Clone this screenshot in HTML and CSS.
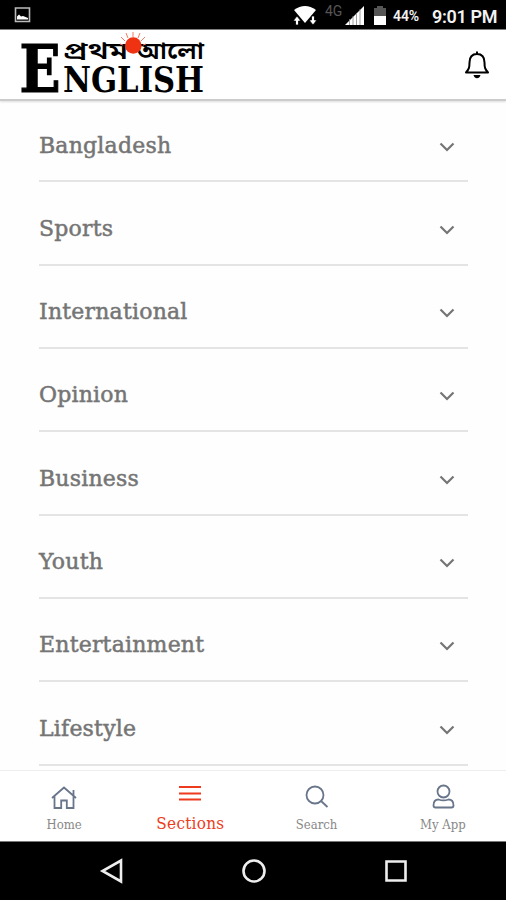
FILE: index.html
```html
<!DOCTYPE html>
<html lang="en">
<head>
<meta charset="utf-8">
<meta name="viewport" content="width=device-width, initial-scale=1">
<title>Prothom Alo English</title>
<link rel="stylesheet" href="styles.css">
</head>
<body>
<div class="status">
  <svg class="status-photo" width="18" height="18" viewBox="0 0 18 18"><path d="M1.500 2h14v13.500h-14z" fill="none" stroke="#bbb" stroke-width="1.6"/><path d="M3 13.500v-3l2-2 2 2 2-.5 5 2v1.500z" fill="#fff"/></svg>
  <svg class="status-icons" width="96" height="29" viewBox="0 0 96 29">
    <path d="M0 10Q11 2 22 10L11 23z" fill="#fff"/>
    <path d="M-1 21l4-5 4 5H4.500v4h-3v-4zM15 20h2.500v-4h3v4H23l-4 5z" fill="#fff" stroke="#000" stroke-width=".8"/>
    <text x="31" y="16" class="network">4G</text>
    <path d="M51 25L70 6v19z" fill="#fff"/>
    <path d="M55.500 19v6M59 16v9M62.500 13v12M66 9v16" stroke="#888" stroke-width=".8"/>
    <path d="M80 8h3V6h6v2h3v9H80z" fill="#555"/><path d="M80 16h12v9H80z" fill="#fff"/>
  </svg>
  <span class="battery">44%</span><span class="clock">9:01 PM</span>
</div>
<header class="header">
  <svg class="logo" width="184" height="65" viewBox="0 0 184 65">
    <text x="-1.500" y="61.500" class="logo-text logo-initial" textLength="41" lengthAdjust="spacingAndGlyphs">E</text>
    <text x="42" y="61.500" class="logo-text logo-name" textLength="141" lengthAdjust="spacingAndGlyphs">NGLISH</text>
    <text x="42" y="29" class="logo-bangla" textLength="65" lengthAdjust="spacingAndGlyphs">প্রথম</text>
    <text x="115" y="29" class="logo-bangla" textLength="68" lengthAdjust="spacingAndGlyphs">আলো</text>
    <path d="M112 7V2M107 8l-2-5M117 8l2-5M104 11l-4-4M120 11l4-4M102 15l-3-1M122 15l3-1" stroke="#f47a63" stroke-width="1"/>
    <circle cx="112.300" cy="15.500" r="8.300" fill="#ee3212"/>
  </svg>
  <svg class="bell" width="26" height="30" viewBox="0 0 26 30"><path d="M13 1.500v2M2 22.500c3-3.500 3.500-5 3.500-10C5.500 7 8 4 13 4s7.500 3 7.500 8.500c0 5 .5 6.500 3.500 10z" fill="none" stroke="#000" stroke-width="2" stroke-linejoin="round"/><path d="M9.500 25h7q-1 3.300-3.500 3.300T9.500 25z" fill="#000"/></svg>
</header>
<main class="sections">
  <div class="row"><span>Bangladesh</span><svg class="chevron" viewBox="0 0 16 10"><path d="M1.500 1.500L8 8l6.500-6.500"/></svg></div>
  <div class="row"><span>Sports</span><svg class="chevron" viewBox="0 0 16 10"><path d="M1.500 1.500L8 8l6.500-6.500"/></svg></div>
  <div class="row"><span>International</span><svg class="chevron" viewBox="0 0 16 10"><path d="M1.500 1.500L8 8l6.500-6.500"/></svg></div>
  <div class="row"><span>Opinion</span><svg class="chevron" viewBox="0 0 16 10"><path d="M1.500 1.500L8 8l6.500-6.500"/></svg></div>
  <div class="row"><span>Business</span><svg class="chevron" viewBox="0 0 16 10"><path d="M1.500 1.500L8 8l6.500-6.500"/></svg></div>
  <div class="row"><span>Youth</span><svg class="chevron" viewBox="0 0 16 10"><path d="M1.500 1.500L8 8l6.500-6.500"/></svg></div>
  <div class="row"><span>Entertainment</span><svg class="chevron" viewBox="0 0 16 10"><path d="M1.500 1.500L8 8l6.500-6.500"/></svg></div>
  <div class="row"><span>Lifestyle</span><svg class="chevron" viewBox="0 0 16 10"><path d="M1.500 1.500L8 8l6.500-6.500"/></svg></div>
</main>
<nav class="tabs">
  <a class="tab"><svg width="28" height="26" viewBox="0 0 28 26"><path d="M2 14L14 3.500l12 10.500M4.500 12.500v11.500h6.700v-7.500h5.600v7.500h6.700V12.500M23.500 11.500V6"/></svg><span>Home</span></a>
  <a class="tab active"><svg width="28" height="26" viewBox="0 0 28 26"><path d="M3 3h22M3 9.500h22M3 15.500h22"/></svg><span>Sections</span></a>
  <a class="tab"><svg width="28" height="26" viewBox="0 0 28 26"><circle cx="12" cy="11" r="8.500"/><path d="M18 17l6.500 6"/></svg><span>Search</span></a>
  <a class="tab"><svg width="28" height="26" viewBox="0 0 28 26"><circle cx="14.500" cy="7.500" r="6"/><path d="M9.500 15.500q5 1.800 10 0c3.500 0 5 2.500 5 6 0 1.500-.7 2-2 2h-16c-1.300 0-2-.5-2-2 0-3.500 1.500-6 5-6z"/></svg><span>My App</span></a>
</nav>
<footer class="system">
  <svg width="24" height="24" viewBox="0 0 24 24"><path d="M21 1.500v21L2.500 12z"/></svg>
  <svg width="24" height="24" viewBox="0 0 24 24"><circle cx="12" cy="12" r="10.500"/></svg>
  <svg width="24" height="24" viewBox="0 0 24 24"><path d="M2.500 2.500h19v19h-19z"/></svg>
</footer>
</body>
</html>
```
FILE: styles.css
```css
* { box-sizing: border-box; }
body {
  margin: 0;
  width: 506px;
  height: 900px;
  overflow: hidden;
  display: flex;
  flex-direction: column;
  background: #fefefe;
  font-family: "DejaVu Serif Condensed", "DejaVu Serif", serif;
  font-stretch: condensed;
}
svg { display: block; flex: none; overflow: visible; }
.status {
  height: 30px;
  flex: none;
  display: flex;
  align-items: center;
  padding: 0 8px 0 14px;
  background: #000;
  border-bottom: 1px solid #777;
  color: #f2f2f2;
  font-family: Roboto, sans-serif;
  font-stretch: normal;
  white-space: nowrap;
}
.status-icons { margin-left: auto; }
.network { font: 14px Roboto, sans-serif; fill: #555; }
.battery { width: 29px; margin-left: 3px; font-size: 14px; font-weight: 600; padding-top: 3px; letter-spacing: -.1px; }
.clock { width: 66px; margin-left: 10px; font-size: 18px; font-weight: 600; padding-top: 3px; letter-spacing: -.35px; }
.header {
  height: 71px;
  flex: none;
  display: flex;
  justify-content: space-between;
  padding: 0 16px 0 21px;
  background: #fff;
  border-bottom: 2px solid #ccc;
  box-shadow: 0 1px 2px #ddd;
}
.bell { margin-top: 20px; }
.logo-text { font-family: "DejaVu Serif Condensed", "DejaVu Serif", serif; font-weight: 700; }
.logo-initial { font-size: 65px; stroke: #000; stroke-width: 1.2px; }
.logo-name { font-size: 35px; }
.logo-bangla { font: 600 23px "Noto Sans Bengali", "Noto Serif Bengali", "Noto Sans", sans-serif; }
.sections {
  height: 669px;
  flex: none;
  overflow: hidden;
  padding: 0 38px 0 39px;
}
.row {
  height: 83.35px;
  display: flex;
  align-items: center;
  justify-content: space-between;
  padding: 10px 13px 0 0;
  border-bottom: 2px solid #e4e4e4;
  color: #757575;
  font-family: "DejaVu Serif", serif;
  font-stretch: normal;
  font-size: 22px;
  letter-spacing: .2px;
  -webkit-text-stroke: .5px #757575;
}
.row:first-child { height: 81.35px; }
.chevron { width: 16px; height: 10px; margin-top: 3px; fill: none; stroke: #757575; stroke-width: 2.2; }
.tabs {
  height: 72px;
  flex: none;
  display: grid;
  grid-template-columns: repeat(4, 1fr);
  padding-left: 1px;
  background: #fff;
  border-top: 1px solid #eee;
  border-bottom: 1px solid #777;
}
.tab {
  display: flex;
  flex-direction: column;
  align-items: center;
  padding-top: 13px;
  color: #888;
  font-size: 13px;
}
.tab svg { fill: none; stroke: #68758a; stroke-width: 1.8; }
.tab span { margin-top: 7px; line-height: 16px; white-space: nowrap; }
.tab.active { color: #ee3b20; font-size: 17px; letter-spacing: .25px; }
.tab.active svg { stroke: #ee3b20; stroke-width: 2.2; }
.tab.active span { margin-top: 5px; }
.system {
  flex: 1;
  display: flex;
  align-items: center;
  justify-content: center;
  gap: 118px;
  padding-left: 2px;
  background: #000;
}
.system svg { fill: none; stroke: #eee; stroke-width: 2.6; }
```
